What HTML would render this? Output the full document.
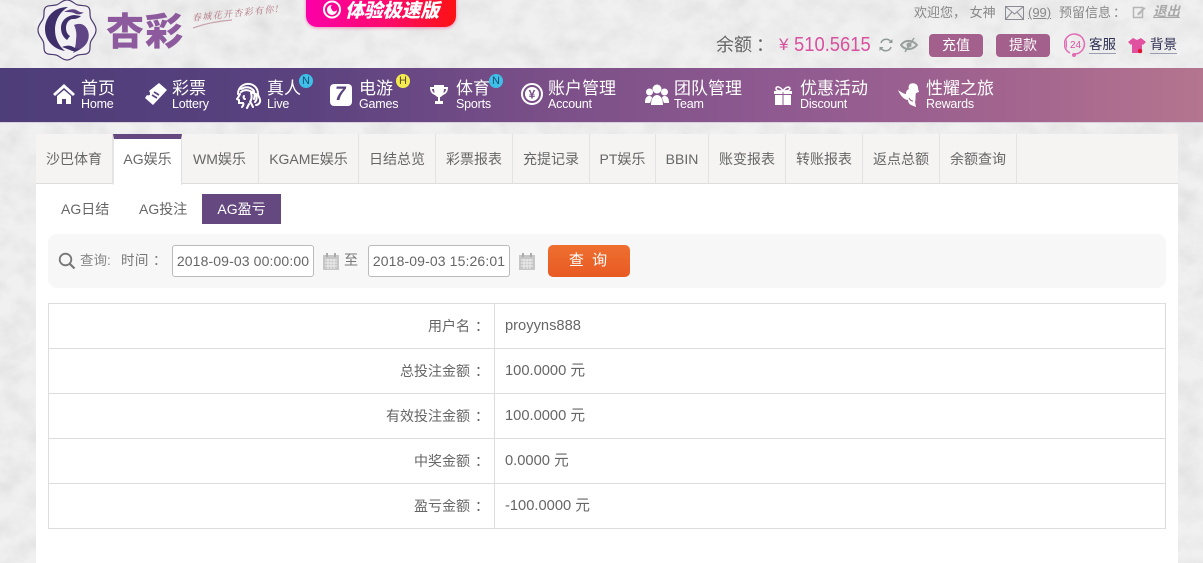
<!DOCTYPE html>
<html lang="zh"><head><meta charset="utf-8"><title>AG盈亏</title>
<style>
html,body{margin:0;padding:0;width:1203px;height:563px;overflow:hidden;background:#e9e9e9}
body{position:relative;font-family:"Liberation Sans","Noto Sans CJK SC",sans-serif;color:#666;font-size:14px}
.a{position:absolute;white-space:nowrap}
.nav{position:absolute;left:0;top:68px;width:1203px;height:54px;background:linear-gradient(90deg,#4d3d78 0,#5a427f 25%,#7a4f88 45%,#8f5a90 65%,#a4658f 85%,#b4758f 100%);border-bottom:1px solid #d8cfdc;box-sizing:content-box}
.cn{position:absolute;top:11px;color:#fff;font-size:17px;line-height:19px;white-space:nowrap}
.en{position:absolute;top:29px;color:#fff;font-size:12.500px;line-height:14px;white-space:nowrap;letter-spacing:-.2px}
.bd{position:absolute;width:14px;height:14px;border-radius:50%;font-size:11px;line-height:14px;text-align:center;color:#1d4d74}
.panel{position:absolute;left:36px;top:134px;width:1142px;height:429px;background:#fff;border-radius:3px 3px 0 0}
.tabs{position:absolute;left:36px;top:134px;width:1142px;height:49px;background:#f5f4f3;border-bottom:1px solid #ddd;box-sizing:content-box;border-radius:3px 3px 0 0}
.tab{position:absolute;top:134px;height:49px;border-right:1px solid #e3e3e3;text-align:center;line-height:50px;font-size:14px;color:#666;box-sizing:content-box}
.on{background:#fff;border-top:5px solid #65487f;top:134px;line-height:41px;border-left:1px solid #e6e6e6;border-right:1px solid #e0e0e0;height:45px;padding-bottom:1px;z-index:2}
.row{position:absolute;left:48px;width:1116px;height:44px;border:1px solid #ddd;border-top:0;box-sizing:content-box;background:#fff}
.lb{position:absolute;left:0;width:435px;text-align:right;line-height:45px;font-size:14px;color:#666}
.lb span,.cl{position:relative;left:5px}
.v{position:absolute;left:456px;top:0;line-height:45px;font-size:14.700px;color:#666}
.dv{position:absolute;left:445px;top:0;bottom:0;width:1px;background:#ddd}
.inp{position:absolute;top:245px;width:140px;height:30px;border:1px solid #bbb;border-radius:3px;background:#fff;font-size:14px;line-height:31px;text-align:center;color:#666;white-space:nowrap;overflow:hidden;letter-spacing:.12px}
.btn{position:absolute;top:34px;height:23px;width:54px;background:#a4608c;border-radius:4px;color:#fff;text-align:center;font-size:14px;line-height:23px}
</style></head>
<body>
<svg class="a" style="left:0;top:0" width="1203" height="563" xmlns="http://www.w3.org/2000/svg">
<filter id="n" x="0" y="0" width="100%" height="100%"><feTurbulence type="fractalNoise" baseFrequency="0.04 0.05" numOctaves="5" seed="7"/><feColorMatrix values="0 0 0 0 0.45  0 0 0 0 0.45  0 0 0 0 0.45  0.7 0.7 0 0 -0.55"/></filter>
<rect width="1203" height="563" fill="#f0f0f0"/>
<rect width="1203" height="563" filter="url(#n)" opacity=".4"/>
</svg>

<!-- logo -->
<svg class="a" style="left:35px;top:-2px" width="64" height="64" viewBox="0 0 64 64">
<path d="M32 2c5 0 7 4 11 5 5 1 9 0 11 3 2 3 0 7 2 11 2 4 5 6 5 11s-3 7-5 11c-2 4 0 8-2 11-2 3-6 2-11 3-4 1-6 5-11 5s-7-4-11-5c-5-1-9 0-11-3-2-3 0-7-2-11-2-4-5-6-5-11s3-7 5-11c2-4 0-8 2-11 2-3 6-2 11-3 4-1 6-5 11-5z" fill="#f2f0f3" stroke="#4c3a6e" stroke-width="1.2"/>
<path d="M33 9C19 9 10 19 10 31c0 11 8 20 20 22-6-5-10-12-10-21 0-10 5-18 13-23z" fill="#3e2f6b"/>
<path d="M26 30c0-7 5-12 13-13l7 1c-2 2-5 3-8 3-4 0-7 4-7 9 0 3 1 6 4 8l-3 4c-4-3-6-7-6-12z" fill="#3e2f6b"/>
<path d="M29 14c5-3 10-4 14-1 2 1 4 2 6 1-3 3-7 3-10 1-3-1-6-1-10-1z" fill="#5a4280"/>
<path d="M39 27c7-3 12 0 14 6s0 13-6 17c-4 3-7 4-9 5 2-4 3-9 3-13 1-6 0-11-2-15z" fill="#5f4585"/>
<path d="M27 49c5-2 9-2 13 1 2 1 4 1 6 0-3 3-8 4-11 2-3-1-5-2-8-3z" fill="#3e2f6b"/>
</svg>
<div class="a" style="left:106px;top:7px;font:900 38px/44px 'Noto Sans CJK SC',sans-serif;color:#8d5b9d;letter-spacing:1px">杏彩</div>
<div class="a" style="left:192px;top:12px;font:italic 9px/12px 'Noto Serif CJK SC',serif;color:#b0727f;transform:rotate(-6deg);transform-origin:left;letter-spacing:1.400px">春城花开杏彩有你!</div>
<svg class="a" style="left:192px;top:16px" width="44" height="14"><path d="M1 12C12 8 26 5 40 4" stroke="#c9a4ae" stroke-width="1.2" fill="none"/></svg>

<!-- promo button -->
<div class="a" style="left:306px;top:-12px;width:150px;height:39px;border-radius:0 0 11px 11px;background:linear-gradient(90deg,#fb00a8,#fc0a6a 55%,#fc1212);box-shadow:0 1px 3px rgba(240,40,130,.5)"></div>
<svg class="a" style="left:322px;top:0" width="20" height="20"><circle cx="10" cy="9.500" r="8" fill="none" stroke="#fff" stroke-width="2"/><path d="M5 10a5 5 0 0 0 10 0c-2 2-4 2-5 0-1-2-2-3 0-5-3 0-5 2-5 5z" fill="#fff"/></svg>
<div class="a" style="left:345px;top:-2px;font:italic 900 19px/24px 'Noto Sans CJK SC',sans-serif;color:#fff;letter-spacing:-.2px">体验极速版</div>

<!-- top right -->
<div class="a" style="left:914px;top:5px;font-size:13px;line-height:16px;color:#888">欢迎您， 女神</div>
<svg class="a" style="left:1005px;top:6px" width="19" height="14"><rect x=".5" y=".5" width="18" height="13" fill="none" stroke="#8b8b94"/><path d="M.5 .5L9.500 8 18.500 .5M.5 13.500L7 6M18.500 13.500L12 6" fill="none" stroke="#8b8b94"/></svg>
<div class="a" style="left:1028px;top:5px;font-size:13px;line-height:16px;color:#888;text-decoration:underline">(99)</div>
<div class="a" style="left:1059px;top:5px;font-size:13px;line-height:16px;color:#888">预留信息<span class="cl" style="left:2px">：</span></div>
<svg class="a" style="left:1132px;top:5px" width="15" height="14"><path d="M1.500 2.500h9v10h-9z" fill="none" stroke="#b5b5b5" stroke-width="1.500"/><path d="M5 9l7-7 1.500 1.500-7 7z" fill="#b5b5b5"/></svg>
<div class="a" style="left:1153px;top:4px;font-size:13.500px;line-height:16px;color:#a8a8a8;font-style:italic;font-weight:700;text-decoration:underline">退出</div>

<div class="a" style="left:716px;top:34px;font-size:18px;line-height:22px;color:#666">余额<span class="cl" style="left:4px">：</span></div>
<div class="a" style="left:779px;top:34px;font-size:17px;line-height:22px;color:#d9509f">¥</div>
<div class="a" style="left:794px;top:33px;font-size:20px;line-height:24px;color:#d9509f;transform:scaleX(.92);transform-origin:left">510.5615</div>
<svg class="a" style="left:878px;top:37px" width="16" height="16"><path d="M3 6a5.500 5.500 0 0 1 10-1M13 10a5.500 5.500 0 0 1-10 1" fill="none" stroke="#8f9a98" stroke-width="1.500"/><path d="M14.500 2v4h-4zM1.500 14v-4h4z" fill="#8f9a98"/></svg>
<svg class="a" style="left:900px;top:37px" width="18" height="16"><path d="M1 8c4-5.500 11-5.500 16 0-5 5.500-12 5.500-16 0z" fill="none" stroke="#98a09e" stroke-width="2"/><circle cx="9" cy="8" r="2.500" fill="#98a09e"/><path d="M14 1L5 15" stroke="#98a09e" stroke-width="1.500"/></svg>
<div class="btn" style="left:929px">充值</div>
<div class="btn" style="left:996px">提款</div>
<svg class="a" style="left:1064px;top:32px" width="24" height="26"><path d="M6 21A10 10 0 1 1 11 22" fill="none" stroke="#e26bb3" stroke-width="1.500"/><path d="M3 7A10 10 0 0 0 3 17z" fill="#e26bb3"/><circle cx="10" cy="23" r="2" fill="#e26bb3"/><text x="6" y="16" font-size="10" font-family="Liberation Sans" fill="#d9509f">24</text></svg>
<div class="a" style="left:1089px;top:36px;font-size:13.500px;line-height:17px;color:#2f2f55;border-bottom:1px solid #9a9ab0">客服</div>
<svg class="a" style="left:1127px;top:37px" width="20" height="17"><path d="M6 1l4 2 4-2 5 4-3 3-1-1v9H5V7L4 8 1 5z" fill="#e0529f"/><circle cx="13" cy="14" r="2.200" fill="#e0142c"/></svg>
<div class="a" style="left:1150px;top:36px;font-size:13.500px;line-height:17px;color:#2f2f55;border-bottom:1px solid #9a9ab0">背景</div>

<!-- nav -->
<div class="nav">
<svg class="a" style="left:52px;top:15px" width="24" height="22"><path d="M12 1L1 11l2 2 9-8 9 8 2-2zM5 13v8h5v-5h4v5h5v-8l-7-6z" fill="#fff"/></svg>
<div class="cn" style="left:81px">首页</div><div class="en" style="left:81px">Home</div>
<svg class="a" style="left:144px;top:14px" width="24" height="24"><path d="M15 1l8 7-14 15-8-7 2-3c2 1 3 0 3-1 0-1 0-2-1-3z" fill="#fff"/><path d="M10 10l5 3M8 13l5 3" stroke="#5a427f" stroke-width="1.800"/></svg>
<div class="cn" style="left:172px">彩票</div><div class="en" style="left:172px">Lottery</div>
<svg class="a" style="left:236px;top:13px" width="26" height="28" fill="none" stroke="#fff" stroke-width="2" stroke-linecap="round"><path d="M2 13C2 6 8 2 14 3c5 1 8 5 8 10 0 3 3 4 2 8-1 2-2 3-4 3"/><path d="M5 8c5-3 10-2 13 2M5 11c4-3 9-2 12 1M17 9c2 3 2 6 1 9M20 13c1 3 1 6-1 8M15 12c1 3 1 6-1 9"/><path d="M4 13c-1 2-2 4-3 5l2 1 0 3 4 0c1 1 0 3-1 4M8 15c-1 1 0 3 1 3M13 23l-2 4M15 22l2 4"/></svg>
<div class="cn" style="left:267px">真人</div><div class="en" style="left:267px">Live</div>
<div class="bd" style="left:299px;top:6px;background:#3ec0e8">N</div>
<div class="a" style="left:330px;top:16px;width:22px;height:22px;border-radius:4px;background:#fff"></div>
<div class="a" style="left:335px;top:15px;font:italic 700 19px/24px 'Liberation Sans',sans-serif;color:#5a427f">7</div>
<div class="cn" style="left:359px">电游</div><div class="en" style="left:359px">Games</div>
<div class="bd" style="left:396px;top:6px;background:#f4ec4e;color:#5a4a20">H</div>
<svg class="a" style="left:429px;top:16px" width="20" height="21"><path d="M5 1h10v2h4c0 5-2 7-5 8-1 1-2 2-3 2v4h3v3H6v-3h3v-4c-1 0-2-1-3-2C3 10 1 8 1 3h4zM3 5c0 2 1 3 2.500 4L5 5zM17 5h-2l-.5 4C16 8 17 7 17 5z" fill="#fff"/></svg>
<div class="cn" style="left:456px">体育</div><div class="en" style="left:456px">Sports</div>
<div class="bd" style="left:489px;top:6px;background:#3ec0e8">N</div>
<svg class="a" style="left:520px;top:14px" width="24" height="24"><circle cx="12" cy="12" r="10" fill="none" stroke="#fff" stroke-width="2"/><circle cx="12" cy="12" r="7" fill="#fff"/><text x="12" y="16.500" text-anchor="middle" font-size="12" font-weight="700" font-family="Liberation Sans" fill="#7a4f88">¥</text></svg>
<div class="cn" style="left:548px">账户管理</div><div class="en" style="left:548px">Account</div>
<svg class="a" style="left:644px;top:15px" width="26" height="23"><circle cx="13" cy="6" r="4.500" fill="#fff"/><circle cx="5.500" cy="9" r="3.500" fill="#fff"/><circle cx="20.500" cy="9" r="3.500" fill="#fff"/><path d="M1 19c0-4 2-6 4-6s3 1 3 2l-2 5H1zM25 19c0-4-2-6-4-6s-3 1-3 2l2 5h5zM7 22c0-7 3-10 6-10s6 3 6 10z" fill="#fff"/></svg>
<div class="cn" style="left:674px">团队管理</div><div class="en" style="left:674px">Team</div>
<svg class="a" style="left:773px;top:17px" width="20" height="21"><path d="M10 6C7 1 3 1 3 3.500S6 6 10 6c4 0 7-.5 7-2.500S13 1 10 6z" fill="none" stroke="#fff" stroke-width="1.500"/><path d="M1 6h8.500v3H1zM10.500 6H19v3h-8.500zM2 10h7.500v10H2zM10.500 10H18v10h-7.500z" fill="#fff"/></svg>
<div class="cn" style="left:800px">优惠活动</div><div class="en" style="left:800px">Discount</div>
<svg class="a" style="left:897px;top:13px" width="24" height="27"><path d="M13 3c4-2 8 0 8 4 0 2 1 3 1 4l-3 1c-1 3 0 6-1 9l1 5-5-2c-2-1-3-3-3-5-3 0-7-3-10-10 3 2 6 4 8 4 0-3 1-4 3-5-1-2 0-4 1-5z" fill="#fff"/><path d="M12 17c1 2 2 3 4 3" stroke="#9a5f8f" fill="none"/></svg>
<div class="cn" style="left:926px">性耀之旅</div><div class="en" style="left:926px">Rewards</div>
</div>

<!-- panel -->
<div class="panel"></div>
<div class="tabs"></div>
<div class="tab" style="left:36px;width:76px">沙巴体育</div>
<div class="tab on" style="left:113px;width:67px">AG娱乐</div>
<div class="tab" style="left:181px;width:77px">WM娱乐</div>
<div class="tab" style="left:259px;width:99px">KGAME娱乐</div>
<div class="tab" style="left:359px;width:76px">日结总览</div>
<div class="tab" style="left:436px;width:76px">彩票报表</div>
<div class="tab" style="left:513px;width:76px">充提记录</div>
<div class="tab" style="left:590px;width:65px">PT娱乐</div>
<div class="tab" style="left:656px;width:52px">BBIN</div>
<div class="tab" style="left:709px;width:76px">账变报表</div>
<div class="tab" style="left:786px;width:76px">转账报表</div>
<div class="tab" style="left:863px;width:76px">返点总额</div>
<div class="tab" style="left:940px;width:76px">余额查询</div>

<div class="a" style="left:61px;top:194px;line-height:30px;font-size:14px;color:#666">AG日结</div>
<div class="a" style="left:139px;top:194px;line-height:30px;font-size:14px;color:#666">AG投注</div>
<div class="a" style="left:202px;top:194px;width:79px;height:30px;background:#65487f;color:#fff;text-align:center;line-height:30px;font-size:14px">AG盈亏</div>

<!-- query -->
<div class="a" style="left:48px;top:234px;width:1118px;height:54px;background:#f7f7f7;border-radius:9px"></div>
<svg class="a" style="left:58px;top:252px" width="18" height="18"><circle cx="7.500" cy="7.500" r="5.800" fill="none" stroke="#777" stroke-width="1.800"/><path d="M11.500 11.500L16.500 16.500" stroke="#777" stroke-width="2.200"/></svg>
<div class="a" style="left:80px;top:252px;font-size:13.500px;line-height:17px;color:#888">查询:</div>
<div class="a" style="left:121px;top:252px;font-size:13.500px;line-height:17px;color:#777;letter-spacing:.4px">时间 ：</div>
<div class="inp" style="left:172px">2018-09-03 00:00:00</div>
<svg class="a" style="left:323px;top:253px" width="16" height="17"><rect x="0" y="2" width="16" height="15" fill="#c6c6c6"/><rect x="3" y="0" width="2" height="4" fill="#aaa"/><rect x="11" y="0" width="2" height="4" fill="#aaa"/><path d="M2 7h12M2 10h12M2 13h12M5 6v10M8 6v10M11 6v10" stroke="#eee"/></svg>
<div class="a" style="left:344px;top:251px;font-size:14px;line-height:18px;color:#777">至</div>
<div class="inp" style="left:368px">2018-09-03 15:26:01</div>
<svg class="a" style="left:519px;top:253px" width="16" height="17"><rect x="0" y="2" width="16" height="15" fill="#c6c6c6"/><rect x="3" y="0" width="2" height="4" fill="#aaa"/><rect x="11" y="0" width="2" height="4" fill="#aaa"/><path d="M2 7h12M2 10h12M2 13h12M5 6v10M8 6v10M11 6v10" stroke="#eee"/></svg>
<div class="a" style="left:548px;top:245px;width:82px;height:32px;border-radius:5px;background:linear-gradient(#ee6f30,#e85a22);color:#fff;font-size:15px;line-height:32px;text-align:center;letter-spacing:2px">查 询</div>

<!-- table -->
<div class="row" style="top:303px;border-top:1px solid #ddd"><div class="dv"></div><div class="lb">用户名<span>：</span></div><div class="v">proyyns888</div></div>
<div class="row" style="top:349px"><div class="dv"></div><div class="lb">总投注金额<span>：</span></div><div class="v">100.0000 元</div></div>
<div class="row" style="top:394px"><div class="dv"></div><div class="lb">有效投注金额<span>：</span></div><div class="v">100.0000 元</div></div>
<div class="row" style="top:439px"><div class="dv"></div><div class="lb">中奖金额<span>：</span></div><div class="v">0.0000 元</div></div>
<div class="row" style="top:484px"><div class="dv"></div><div class="lb">盈亏金额<span>：</span></div><div class="v">-100.0000 元</div></div>
</body></html>
